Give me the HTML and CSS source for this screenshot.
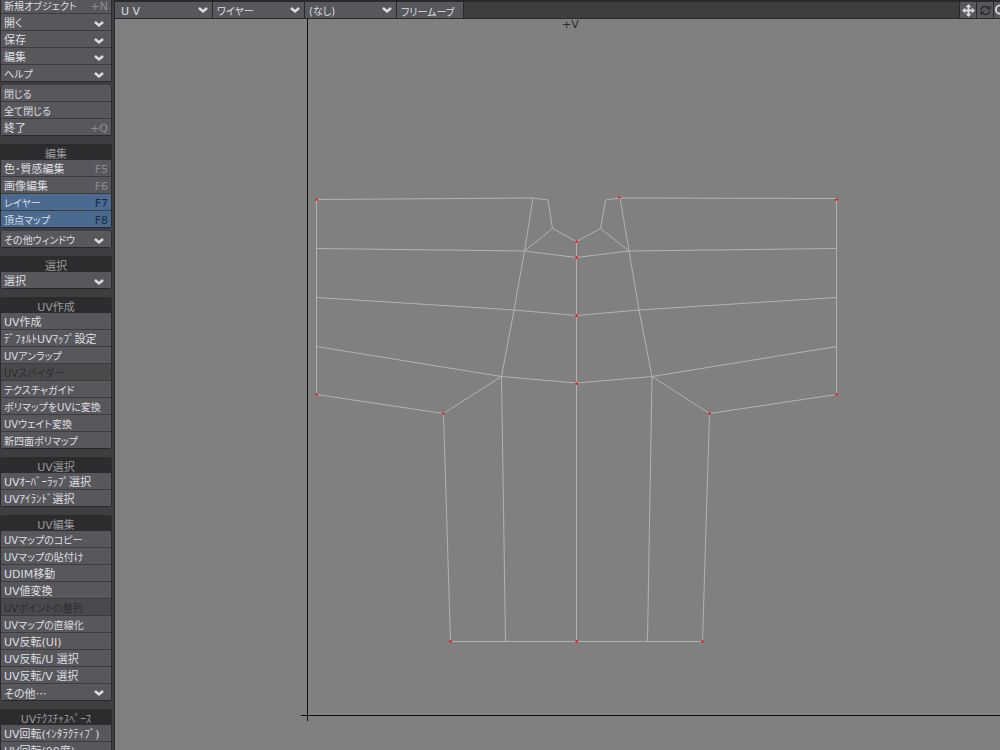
FILE: index.html
```html
<!DOCTYPE html>
<html lang="ja">
<head>
    <meta charset="UTF-8">
    <meta name="viewport" content="width=device-width, initial-scale=1.0">
    <title>UV</title>
    <link rel="stylesheet" href="styles.css">
</head>
<body>

    <svg class="defs" aria-hidden="true">
        <symbol id="chevron" viewBox="0 0 10 8">
            <path d="M1 2 L5 5.500 L9 2" fill="none" stroke="currentColor" stroke-width="2.400"/>
        </symbol>
    </svg>

    <nav class="sidebar">
        <div class="group close">
            <button class="kana">新規オブジェクト<kbd>+N</kbd></button>
            <button aria-haspopup="true">開く<svg class="chevron"><use href="#chevron"/></svg></button>
            <button aria-haspopup="true">保存<svg class="chevron"><use href="#chevron"/></svg></button>
            <button aria-haspopup="true">編集<svg class="chevron"><use href="#chevron"/></svg></button>
            <button class="kana" aria-haspopup="true">ヘルプ<svg class="chevron"><use href="#chevron"/></svg></button>
        </div>
        <div class="group">
            <button class="kana">閉じる</button>
            <button class="kana">全て閉じる</button>
            <button>終了<kbd>+Q</kbd></button>
        </div>

        <div class="group close">
            <h2>編集</h2>
            <button>色･質感編集<kbd>F5</kbd></button>
            <button>画像編集<kbd>F6</kbd></button>
            <button class="kana active">レイヤー<kbd>F7</kbd></button>
            <button class="kana active">頂点マップ<kbd>F8</kbd></button>
        </div>
        <div class="group">
            <button class="kana" aria-haspopup="true">その他ウィンドウ<svg class="chevron"><use href="#chevron"/></svg></button>
        </div>

        <div class="group">
            <h2>選択</h2>
            <button aria-haspopup="true">選択<svg class="chevron"><use href="#chevron"/></svg></button>
        </div>

        <div class="group">
            <h2>UV作成</h2>
            <button>UV作成</button>
            <button class="half">ﾃﾞﾌｫﾙﾄUVﾏｯﾌﾟ設定</button>
            <button class="kana">UVアンラップ</button>
            <button class="kana" disabled>UVスパイダー</button>
            <button class="kana">テクスチャガイド</button>
            <button class="kana">ポリマップをUVに変換</button>
            <button class="kana">UVウェイト変換</button>
            <button class="kana">新四面ポリマップ</button>
        </div>

        <div class="group">
            <h2>UV選択</h2>
            <button class="half">UVｵｰﾊﾞｰﾗｯﾌﾟ選択</button>
            <button class="half">UVｱｲﾗﾝﾄﾞ選択</button>
        </div>

        <div class="group">
            <h2>UV編集</h2>
            <button class="kana">UVマップのコピー</button>
            <button class="kana">UVマップの貼付け</button>
            <button>UDIM移動</button>
            <button>UV値変換</button>
            <button class="kana" disabled>UVポイントの整列</button>
            <button class="kana">UVマップの直線化</button>
            <button>UV反転(UI)</button>
            <button>UV反転/U 選択</button>
            <button>UV反転/V 選択</button>
            <button class="more" aria-haspopup="true">その他…<svg class="chevron"><use href="#chevron"/></svg></button>
        </div>

        <div class="group">
            <h2>UVﾃｸｽﾁｬｽﾍﾟｰｽ</h2>
            <button class="half">UV回転(ｲﾝﾀﾗｸﾃｨﾌﾞ)</button>
            <button>UV回転(90度)</button>
        </div>
    </nav>

    <main class="viewport">
        <div class="toolbar">
            <label class="picker wide">
                <select aria-label="ビュー"><option>U V</option></select>
                <svg class="chevron"><use href="#chevron"/></svg>
            </label>
            <label class="picker">
                <select class="kana" aria-label="表示"><option>ワイヤー</option></select>
                <svg class="chevron"><use href="#chevron"/></svg>
            </label>
            <label class="picker">
                <select class="kana" aria-label="画像"><option>(なし)</option></select>
                <svg class="chevron"><use href="#chevron"/></svg>
            </label>
            <button class="kana free-move">フリームーブ</button>
            <div class="tools">
                <button aria-label="移動">
                    <svg viewBox="0 0 14 14"><path d="M7 0 L10 3.500 H8 V6 H10.500 V4 L14 7 L10.500 10 V8 H8 V10.500 H10 L7 14 L4 10.500 H6 V8 H3.500 V10 L0 7 L3.500 4 V6 H6 V3.500 H4 Z" fill="#dcdcde"/></svg>
                </button>
                <button aria-label="回転">
                    <svg viewBox="0 0 14 14"><path d="M2 6.500 C2.500 3 7 1.500 10.500 4 M12 7.500 C11.500 11 7 12.500 3.500 10" fill="none" stroke="#29292b" stroke-width="1.500"/><path d="M12.500 1.500 V6 H8 Z M1.500 12.500 V8 H6 Z" fill="#29292b"/></svg>
                </button>
                <button class="cut" aria-label="ズーム">
                    <svg viewBox="0 0 14 14"><circle cx="6.500" cy="6" r="4.500" fill="none" stroke="#dcdcde" stroke-width="2"/><path d="M10 9.500 L13 13" stroke="#dcdcde" stroke-width="2"/></svg>
                </button>
            </div>
        </div>

        <svg class="canvas" viewBox="115 19 885 731" preserveAspectRatio="xMinYMin slice">
            <!-- axes -->
            <g class="axis">
                <path d="M307.500 19 V721 M301 715.500 H2000"/>
            </g>
            <text class="axis-label" x="562" y="28">+V</text>

            <g class="wire">
                <!-- outline -->
                <path d="M316.500 199.500 L533 198 L548 200 L552.500 228.500 L576.500 241.500 L600.500 228.500 L605.500 200 L620 198 L836.500 198.500 V394.500 L709.500 413.500 L702.500 641.500 H450.500 L443.500 413.500 L316.500 394.500 Z"/>
                <!-- body and sleeve seams -->
                <path d="M533 198 L524.500 251 L514 310 L501.500 376.500 L443.500 413.500"/>
                <path d="M620 198 L629 251 L639 310 L652 376.500 L709.500 413.500"/>
                <path d="M552.500 228.500 L524.500 251 M600.500 228.500 L629 251"/>
                <path d="M501.500 376.500 L505.500 641 M652 376.500 L647.500 641 M576.500 241.500 V641.500"/>
                <!-- rows -->
                <path d="M316.500 248.500 L524.500 251 L576.500 257.500 L629 251 L836.500 248.500"/>
                <path d="M316.500 297.500 L514 310 L576.500 315.500 L639 310 L836.500 297.500"/>
                <path d="M316.500 346.500 L501.500 376.500 L576.500 383 L652 376.500 L836.500 346.500"/>
            </g>

            <g class="points">
                <path d="M315 199.500 h3 m-1.500 -1.500 v3"/>
                <path d="M835 199.500 h3 m-1.500 -1.500 v3"/>
                <path d="M315 394.500 h3 m-1.500 -1.500 v3"/>
                <path d="M835 394.500 h3 m-1.500 -1.500 v3"/>
                <path d="M442 413.500 h3 m-1.500 -1.500 v3"/>
                <path d="M708 413.500 h3 m-1.500 -1.500 v3"/>
                <path d="M618 197.500 h3 m-1.500 -1.500 v3"/>
                <path d="M575 241.500 h3 m-1.500 -1.500 v3"/>
                <path d="M575 257.500 h3 m-1.500 -1.500 v3"/>
                <path d="M575 315.500 h3 m-1.500 -1.500 v3"/>
                <path d="M575 383.500 h3 m-1.500 -1.500 v3"/>
                <path d="M449 641.500 h3 m-1.500 -1.500 v3"/>
                <path d="M575 641.500 h3 m-1.500 -1.500 v3"/>
                <path d="M701 641.500 h3 m-1.500 -1.500 v3"/>
            </g>
        </svg>
    </main>

</body>
</html>
```

FILE: styles.css
```css
* {
    box-sizing: border-box;
}

body {
    display: flex;
    height: 100vh;
    margin: 0;
    overflow: hidden;
    background-color: #3e3e40;
    color: #dedee0;
    font-family: "DejaVu Sans", "Noto Sans CJK JP", sans-serif;
    font-size: 11px;
    font-feature-settings: "palt";
}

button, select, kbd {
    font: inherit;
    font-feature-settings: inherit;
    color: inherit;
}

.kana {
    font-size: 10px;
}

.kana kbd {
    font-size: 11px;
}

.half {
    font-feature-settings: normal;
}

.defs {
    position: absolute;
    width: 0;
    height: 0;
}

.chevron {
    width: 10px;
    height: 8px;
    flex: none;
}

/* Left menu */
.sidebar {
    flex: none;
    width: 115px;
    margin-top: -3px;
    padding-right: 2px;
    border-right: 1px solid #29292b;
    overflow: hidden;
}

.group {
    margin-bottom: 8px;
    border-right: 1px solid #2c2c2e;
    border-left: 1px solid #2c2c2e;
    border-radius: 3px;
    overflow: hidden;
}

.group.close {
    margin-bottom: 3px;
}

.group h2 {
    height: 16px;
    margin: 0;
    background-color: #2c2c2e;
    color: #9a9a9c;
    font-size: 11px;
    font-weight: normal;
    line-height: 21px;
    text-align: center;
}

.group button {
    display: flex;
    align-items: center;
    justify-content: space-between;
    width: 100%;
    height: 17px;
    padding: 4px 3px 0;
    border: none;
    border-bottom: 1px solid #3c3c3f;
    background-color: #58585c;
    line-height: 12px;
    text-align: left;
    white-space: nowrap;
}

.group button:last-child {
    border-bottom-color: #29292b;
}

.group .chevron {
    margin-right: 4px;
}

.group kbd {
    color: #8c8c90;
}

.group button.active {
    background-color: #4a6a90;
}

.group button.active kbd {
    color: #1b2a40;
}

.group button:disabled {
    background-color: #4a4a4d;
    color: #2c2c2e;
}

.group button.more {
    padding-top: 2px;
    font-family: "Noto Sans CJK JP", sans-serif;
}

/* UV view */
.viewport {
    display: flex;
    flex: 1;
    flex-direction: column;
    min-width: 0;
}

.toolbar {
    display: flex;
    flex: none;
    height: 19px;
    border-top: 2px solid #29292b;
    border-bottom: 1px solid #29292b;
}

.picker {
    display: flex;
    align-items: center;
    width: 92px;
    padding-right: 4px;
    border-right: 1px solid #29292b;
    background-color: #58585c;
}

.picker.wide {
    width: 98px;
}

.picker select {
    flex: 1;
    min-width: 0;
    padding: 2px 0 0 4px;
    border: none;
    background: none;
    appearance: none;
}

.picker.wide select {
    padding-left: 6px;
}

.toolbar button {
    padding: 0;
    border: none;
    border-right: 1px solid #29292b;
    background-color: #58585c;
}

.toolbar .free-move {
    width: 67px;
    padding: 2px 0 0 4px;
    text-align: left;
    white-space: nowrap;
}

.tools {
    display: flex;
    margin-left: auto;
    border-left: 1px solid #29292b;
}

.tools button {
    display: flex;
    align-items: center;
    justify-content: center;
    width: 17px;
    overflow: hidden;
}

.tools svg {
    flex: none;
    width: 13px;
    height: 13px;
}

.tools button.cut {
    justify-content: flex-start;
    width: 6px;
    border-right: none;
}

.canvas {
    display: block;
    flex: 1;
    width: 100%;
    min-height: 0;
    background-color: #808080;
}

.axis {
    fill: none;
    stroke: #0c0c0c;
}

.axis-label {
    fill: #2c2c2e;
}

.wire {
    fill: none;
    stroke: #b2b2b2;
}

.points {
    fill: none;
    stroke: #f02020;
}
```
